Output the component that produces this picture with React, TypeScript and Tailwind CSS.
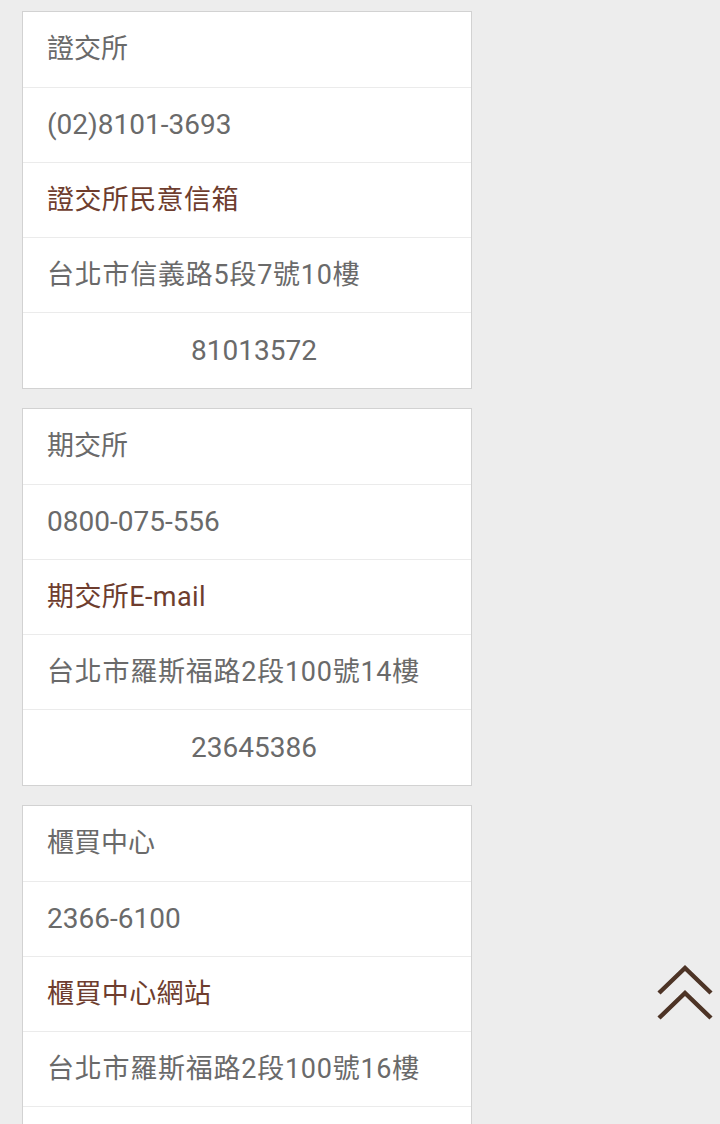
import React from "react";

type Card = { name: string; phone: string; link: string; addr: string; fax: string };

const cards: Card[] = [
  { name: "證交所", phone: "(02)8101-3693", link: "證交所民意信箱", addr: "台北市信義路5段7號10樓", fax: "81013572" },
  { name: "期交所", phone: "0800-075-556", link: "期交所E-mail", addr: "台北市羅斯福路2段100號14樓", fax: "23645386" },
  { name: "櫃買中心", phone: "2366-6100", link: "櫃買中心網站", addr: "台北市羅斯福路2段100號16樓", fax: "23691716" },
];

export default function App() {
  return (
    <div
      className="relative w-[720px] h-[1124px] overflow-hidden bg-[#ededed]"
      style={{ fontFamily: 'Roboto, "Noto Sans CJK TC", sans-serif' }}
    >
      <div className="flex flex-col gap-[19px] pt-[11px] pl-[22px]">
        {cards.map((c) => (
          <div key={c.name} className="w-[450px] bg-white border border-[#d2d2d2] flex flex-col">
            <div className="h-[75px] flex items-center px-[24px] text-[27px] text-[#6a6a6a]">{c.name}</div>
            <div className="h-[75px] flex items-center px-[24px] text-[28px] text-[#6a6a6a] border-t border-[#ebebeb]">{c.phone}</div>
            <div className="h-[75px] flex items-center px-[24px] text-[27px] text-[#6e3d2e] border-t border-[#ebebeb] tracking-[0.4px]">{c.link}</div>
            <div className="h-[75px] flex items-center px-[24px] text-[27px] text-[#6a6a6a] border-t border-[#ebebeb] tracking-[0.75px]">{c.addr}</div>
            <div className="h-[76px] flex items-center justify-center pl-[24px] pr-[10px] text-[28px] text-[#6a6a6a] border-t border-[#ebebeb]">{c.fax}</div>
          </div>
        ))}
      </div>
      <svg
        className="absolute left-[656px] top-[963px]"
        width="60"
        height="60"
        viewBox="0 0 60 60"
        fill="none"
        stroke="#4d3426"
        strokeWidth="4.5"
      >
        <polyline points="3,30 29,5 55,30" />
        <polyline points="3,55 29,30 55,55" />
      </svg>
    </div>
  );
}
